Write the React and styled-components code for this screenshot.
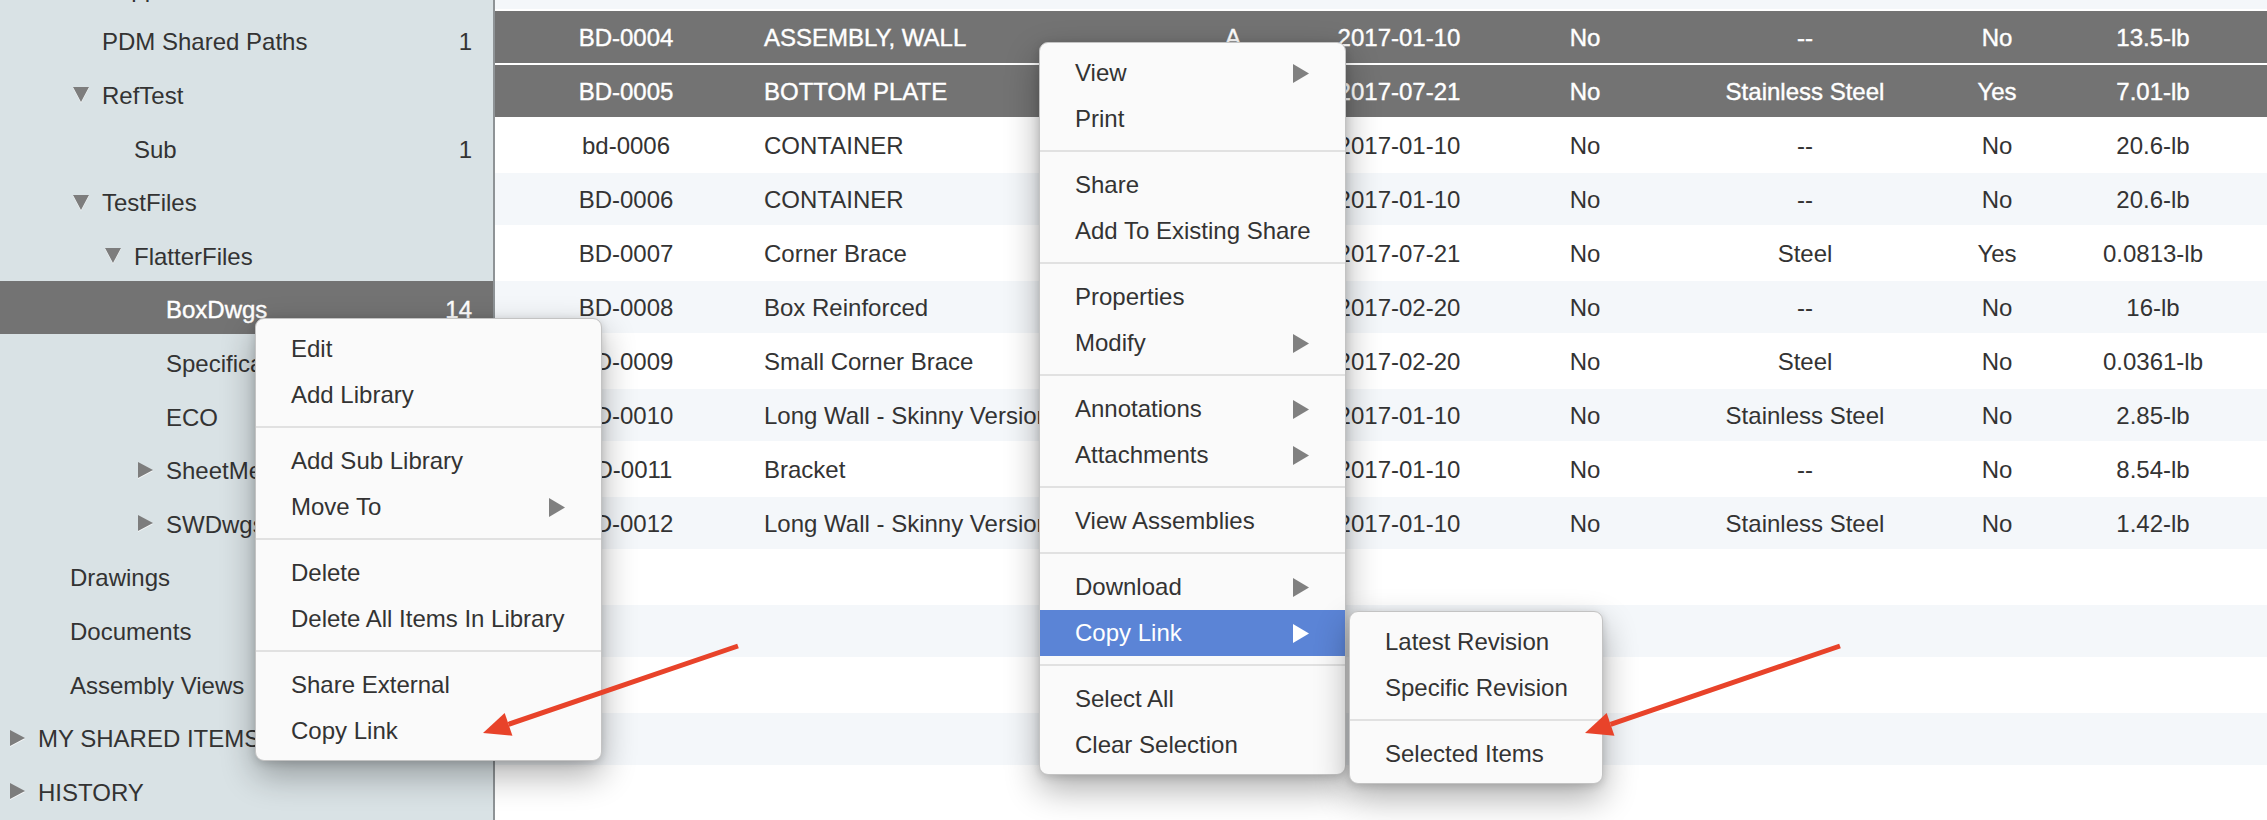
import React from "react";
import styled, { createGlobalStyle } from "styled-components";

const GlobalStyle = createGlobalStyle`
  html, body {
    margin: 0;
    padding: 0;
  }
  body {
    font-family: "Liberation Sans", Arial, Helvetica, sans-serif;
    background: #fff;
    overflow: hidden;
  }
  #root {
    width: 2267px;
    height: 820px;
  }
`;

const tree = [
  { label: "Suppliers", depth: 2 },
  { label: "PDM Shared Paths", depth: 2, count: 1 },
  { label: "RefTest", depth: 2, toggle: "down" },
  { label: "Sub", depth: 3, count: 1 },
  { label: "TestFiles", depth: 2, toggle: "down" },
  { label: "FlatterFiles", depth: 3, toggle: "down" },
  { label: "BoxDwgs", depth: 4, count: 14, selected: true },
  { label: "Specifications", depth: 4 },
  { label: "ECO", depth: 4 },
  { label: "SheetMetal", depth: 4, toggle: "right" },
  { label: "SWDwgs", depth: 4, toggle: "right" },
  { label: "Drawings", depth: 1 },
  { label: "Documents", depth: 1 },
  { label: "Assembly Views", depth: 1 },
  { label: "MY SHARED ITEMS", depth: 0, toggle: "right" },
  { label: "HISTORY", depth: 0, toggle: "right" },
];

const parts = [
  ["BD-0004", "ASSEMBLY, WALL", "A", "2017-01-10", "No", "--", "No", "13.5-lb", true],
  ["BD-0005", "BOTTOM PLATE", "A", "2017-07-21", "No", "Stainless Steel", "Yes", "7.01-lb", true],
  ["bd-0006", "CONTAINER", "A", "2017-01-10", "No", "--", "No", "20.6-lb"],
  ["BD-0006", "CONTAINER", "A", "2017-01-10", "No", "--", "No", "20.6-lb"],
  ["BD-0007", "Corner Brace", "A", "2017-07-21", "No", "Steel", "Yes", "0.0813-lb"],
  ["BD-0008", "Box Reinforced", "A", "2017-02-20", "No", "--", "No", "16-lb"],
  ["BD-0009", "Small Corner Brace", "A", "2017-02-20", "No", "Steel", "No", "0.0361-lb"],
  ["BD-0010", "Long Wall - Skinny Version", "A", "2017-01-10", "No", "Stainless Steel", "No", "2.85-lb"],
  ["BD-0011", "Bracket", "A", "2017-01-10", "No", "--", "No", "8.54-lb"],
  ["BD-0012", "Long Wall - Skinny Version", "A", "2017-01-10", "No", "Stainless Steel", "No", "1.42-lb"],
];

const libraryMenu = [
  ["Edit", "Add Library"],
  ["Add Sub Library", { label: "Move To", sub: true }],
  ["Delete", "Delete All Items In Library"],
  ["Share External", "Copy Link"],
];

const itemMenu = [
  [{ label: "View", sub: true }, "Print"],
  ["Share", "Add To Existing Share"],
  ["Properties", { label: "Modify", sub: true }],
  [{ label: "Annotations", sub: true }, { label: "Attachments", sub: true }],
  ["View Assemblies"],
  [{ label: "Download", sub: true }, { label: "Copy Link", sub: true, active: true }],
  ["Select All", "Clear Selection"],
];

const linkMenu = [["Latest Revision", "Specific Revision"], ["Selected Items"]];

const Toggle = ({ dir }) => (
  <ToggleIcon viewBox="0 0 16 16">
    {dir === "down" ? (
      <polygon points="0,1 16,1 8,16" />
    ) : (
      <polygon points="1,0 16,8 1,16" />
    )}
  </ToggleIcon>
);

const SubArrow = ({ active }) => (
  <ArrowIcon viewBox="0 0 16 19" $active={active}>
    <polygon points="0,0 16,9.5 0,19" />
  </ArrowIcon>
);

const ContextMenu = ({ groups, top, left, width }) => (
  <Menu $top={top} $left={left} $width={width}>
    {groups.map((group, gi) => (
      <React.Fragment key={gi}>
        {gi > 0 && <Separator />}
        {group.map((it) => {
          const item = typeof it === "string" ? { label: it } : it;
          return (
            <MenuItem key={item.label} $active={item.active}>
              <span>{item.label}</span>
              {item.sub && <SubArrow active={item.active} />}
            </MenuItem>
          );
        })}
      </React.Fragment>
    ))}
  </Menu>
);

// tip of the head, tail is up and to the right
const arrowPath = (tx, ty) => {
  const dx = 255;
  const dy = -87;
  const len = Math.hypot(dx, dy);
  const ux = dx / len;
  const uy = dy / len;
  const bx = tx + ux * 27;
  const by = ty + uy * 27;
  const nx = -uy;
  const ny = ux;
  return {
    line: [tx + dx, ty + dy, bx, by],
    head: `${tx},${ty} ${bx + nx * 12},${by + ny * 12} ${bx - nx * 12},${by - ny * 12}`,
  };
};

const App = () => {
  const arrows = [arrowPath(483, 733), arrowPath(1585, 733)];
  const emptyRows = 5;

  return (
    <>
      <GlobalStyle />
      <Page>
        <Sidebar>
          <TreeList>
            {tree.map((node) => (
              <TreeRow key={node.label} $depth={node.depth} $selected={node.selected}>
                <ToggleSlot>{node.toggle && <Toggle dir={node.toggle} />}</ToggleSlot>
                <TreeLabel>{node.label}</TreeLabel>
                {node.count && <Count>{node.count}</Count>}
              </TreeRow>
            ))}
          </TreeList>
        </Sidebar>

        <Table>
          <TableBody>
            <Row $odd />
            {parts.map((p, i) => (
              <Row key={p[0] + i} $odd={i % 2 === 1} $selected={p[8]}>
                <Cell>{p[0]}</Cell>
                <Cell $left>{p[1]}</Cell>
                <Cell>{p[2]}</Cell>
                <Cell>{p[3]}</Cell>
                <Cell>{p[4]}</Cell>
                <Cell>{p[5]}</Cell>
                <Cell>{p[6]}</Cell>
                <Cell>{p[7]}</Cell>
              </Row>
            ))}
            {Array.from({ length: emptyRows }).map((_, i) => (
              <Row key={"e" + i} $odd={(parts.length + i) % 2 === 1} />
            ))}
          </TableBody>
        </Table>

        <ContextMenu groups={libraryMenu} top={318} left={255} width={347} />
        <ContextMenu groups={itemMenu} top={42} left={1039} width={307} />
        <ContextMenu groups={linkMenu} top={611} left={1349} width={254} />

        <Annotations viewBox="0 0 2267 820">
          {arrows.map((a, i) => (
            <g key={i}>
              <line x1={a.line[0]} y1={a.line[1]} x2={a.line[2]} y2={a.line[3]} />
              <polygon points={a.head} />
            </g>
          ))}
        </Annotations>
      </Page>
    </>
  );
};

const Page = styled.div`
  position: relative;
  display: flex;
  width: 2267px;
  height: 820px;
  overflow: hidden;
  color: #333;
  font-size: 24px;
`;

const Sidebar = styled.div`
  flex: 0 0 493px;
  background: #d9e2e5;
  border-right: 2px solid #8e9396;
  overflow: hidden;
`;

const TreeList = styled.div`
  margin-top: -41px;
`;

const TreeRow = styled.div`
  display: flex;
  align-items: center;
  box-sizing: border-box;
  height: 53.6px;
  padding-top: 6px;
  padding-left: ${(p) => 9 + p.$depth * 32}px;
  padding-right: 21px;
  background: ${(p) => (p.$selected ? "#737373" : "transparent")};
  color: ${(p) => (p.$selected ? "#fff" : "#333")};
  -webkit-text-stroke: ${(p) => (p.$selected ? "0.4px #fff" : "0")};
  white-space: nowrap;
`;

const ToggleSlot = styled.span`
  display: flex;
  align-items: center;
  flex: 0 0 16px;
  height: 16px;
  margin-right: 13px;
  margin-top: -3px;
`;

const ToggleIcon = styled.svg`
  width: 16px;
  height: 16px;
  fill: #7d7d7d;
  filter: drop-shadow(0 1px 0 rgba(255, 255, 255, 0.8));
`;

const TreeLabel = styled.span`
  flex: 1;
`;

const Count = styled.span`
  text-align: right;
`;

const Table = styled.div`
  flex: 1;
  overflow: hidden;
  background: #fff;
`;

const TableBody = styled.div`
  margin-top: -43px;
`;

const Row = styled.div`
  display: grid;
  grid-template-columns: 262px 416px 120px 212px 160px 280px 104px 208px 1fr;
  align-items: center;
  height: 54px;
  box-sizing: border-box;
  padding-top: 2px;
  border-bottom: 2px solid #fff;
  background: ${(p) => (p.$selected ? "#737373" : p.$odd ? "#f4f7fa" : "#fff")};
  color: ${(p) => (p.$selected ? "#fff" : "#333")};
  -webkit-text-stroke: ${(p) => (p.$selected ? "0.4px #fff" : "0")};
`;

const Cell = styled.div`
  text-align: ${(p) => (p.$left ? "left" : "center")};
  padding-left: ${(p) => (p.$left ? "7px" : "0")};
  white-space: nowrap;
  overflow: hidden;
`;

const Menu = styled.div`
  position: absolute;
  top: ${(p) => p.$top}px;
  left: ${(p) => p.$left}px;
  width: ${(p) => p.$width}px;
  box-sizing: border-box;
  padding: 7px 0 6px;
  background: #fafafa;
  border: 1px solid #c3c3c3;
  border-radius: 9px;
  box-shadow: 0 14px 34px rgba(0, 0, 0, 0.32), 0 2px 8px rgba(0, 0, 0, 0.15);
  color: #333;
  font-size: 24px;
`;

const MenuItem = styled.div`
  display: flex;
  align-items: center;
  justify-content: space-between;
  height: 46px;
  padding: 0 36px 0 35px;
  background: ${(p) => (p.$active ? "#5b84d6" : "transparent")};
  color: ${(p) => (p.$active ? "#fff" : "#333")};
  white-space: nowrap;
`;

const ArrowIcon = styled.svg`
  width: 16px;
  height: 19px;
  fill: ${(p) => (p.$active ? "#fff" : "#808080")};
`;

const Separator = styled.div`
  height: 2px;
  margin: 8px 0 10px;
  background: #e1e1e1;
`;

const Annotations = styled.svg`
  position: absolute;
  top: 0;
  left: 0;
  width: 2267px;
  height: 820px;
  pointer-events: none;
  line {
    stroke: #e8432a;
    stroke-width: 5;
  }
  polygon {
    fill: #e8432a;
  }
`;

export default App;
